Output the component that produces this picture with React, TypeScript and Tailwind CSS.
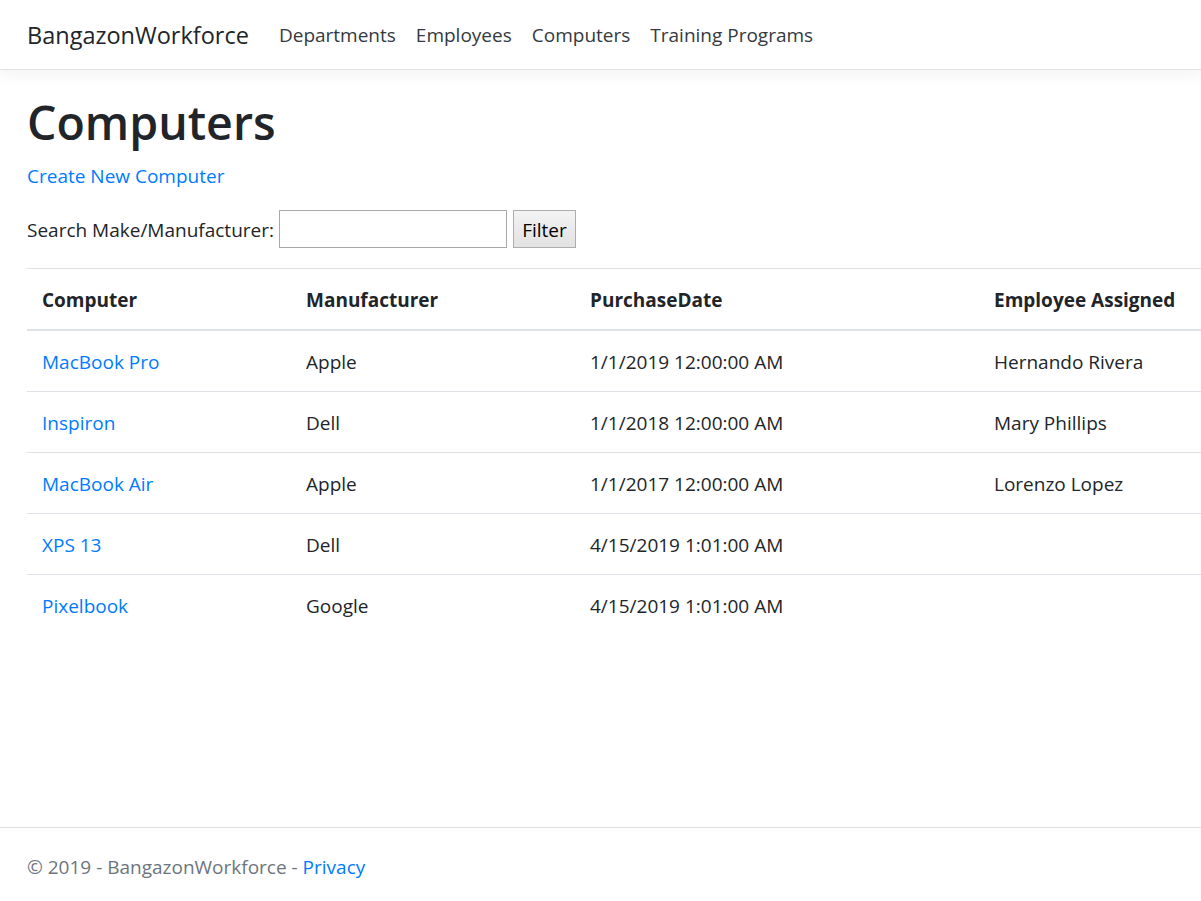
export default function App() {
  const rows = [
    { name: "MacBook Pro", make: "Apple", date: "1/1/2019 12:00:00 AM", emp: "Hernando Rivera" },
    { name: "Inspiron", make: "Dell", date: "1/1/2018 12:00:00 AM", emp: "Mary Phillips" },
    { name: "MacBook Air", make: "Apple", date: "1/1/2017 12:00:00 AM", emp: "Lorenzo Lopez" },
    { name: "XPS 13", make: "Dell", date: "4/15/2019 1:01:00 AM", emp: "" },
    { name: "Pixelbook", make: "Google", date: "4/15/2019 1:01:00 AM", emp: "" },
  ];

  return (
    <div className="flex min-h-[901px] flex-col overflow-hidden bg-white font-['Segoe_UI','Open_Sans',sans-serif] text-[19px] leading-[30px] text-[#212529]">
      <nav className="flex h-[70px] items-center border-b border-[#dee2e6] pl-[27px] pt-[1px] shadow-[0_5px_15px_rgba(0,0,0,0.05)]">
        <a className="mr-[20px] text-[23.5px] text-[#212529]">BangazonWorkforce</a>
        <ul className="flex">
          {["Departments", "Employees", "Computers", "Training Programs"].map((l) => (
            <li key={l}>
              <a className="block px-[10px] text-[#343a40]">{l}</a>
            </li>
          ))}
        </ul>
      </nav>

      <main className="flex-1 pl-[27px] pt-[20px]">
        <h1 className="mb-[8px] pt-[2px] text-[46.5px] font-semibold leading-[60px]">Computers</h1>
        <p className="mb-[19px] pt-[1px]">
          <a className="text-[#007bff]">Create New Computer</a>
        </p>
        <form className="mb-[20px] flex h-[38px] items-center">
          <span className="pt-[2px]">Search Make/Manufacturer:</span>
          <input type="text" className="ml-[5px] h-[38px] w-[228px] border border-[#a9a9a9] bg-white" />
          <button type="button" className="ml-[6px] h-[38px] w-[63px] border border-[#adadad] bg-gradient-to-b from-[#f3f3f3] to-[#e2e2e2] pt-[1px] text-[#000]">
            Filter
          </button>
        </form>

        <table className="w-[1174px] table-fixed border-collapse text-left">
          <colgroup>
            <col className="w-[264px]" />
            <col className="w-[284px]" />
            <col className="w-[404px]" />
            <col />
          </colgroup>
          <thead>
            <tr>
              <th className="border-t border-b-2 border-[#dee2e6] px-[15px] pt-[16px] pb-[14px] font-bold">Computer</th>
              <th className="border-t border-b-2 border-[#dee2e6] px-[15px] pt-[16px] pb-[14px] font-bold">Manufacturer</th>
              <th className="border-t border-b-2 border-[#dee2e6] px-[15px] pt-[16px] pb-[14px] font-bold">PurchaseDate</th>
              <th className="whitespace-nowrap border-t border-b-2 border-[#dee2e6] px-[15px] pt-[16px] pb-[14px] font-bold">Employee Assigned</th>
            </tr>
          </thead>
          <tbody>
            {rows.map((r, i) => (
              <tr key={r.name}>
                <td className={`${i ? "border-t" : ""} border-[#dee2e6] px-[15px] pt-[16px] pb-[14px]`}>
                  <a className="text-[#007bff]">{r.name}</a>
                </td>
                <td className={`${i ? "border-t" : ""} border-[#dee2e6] px-[15px] pt-[16px] pb-[14px]`}>{r.make}</td>
                <td className={`${i ? "border-t" : ""} border-[#dee2e6] px-[15px] pt-[16px] pb-[14px]`}>{r.date}</td>
                <td className={`${i ? "border-t" : ""} border-[#dee2e6] px-[15px] pt-[16px] pb-[14px]`}>{r.emp}</td>
              </tr>
            ))}
          </tbody>
        </table>
      </main>

      <footer className="flex h-[74px] items-center border-t border-[#dee2e6] pl-[27px] pt-[4px] text-[#6c757d]">
        <span>
          © 2019 - BangazonWorkforce - <a className="text-[#007bff]">Privacy</a>
        </span>
      </footer>
    </div>
  );
}
